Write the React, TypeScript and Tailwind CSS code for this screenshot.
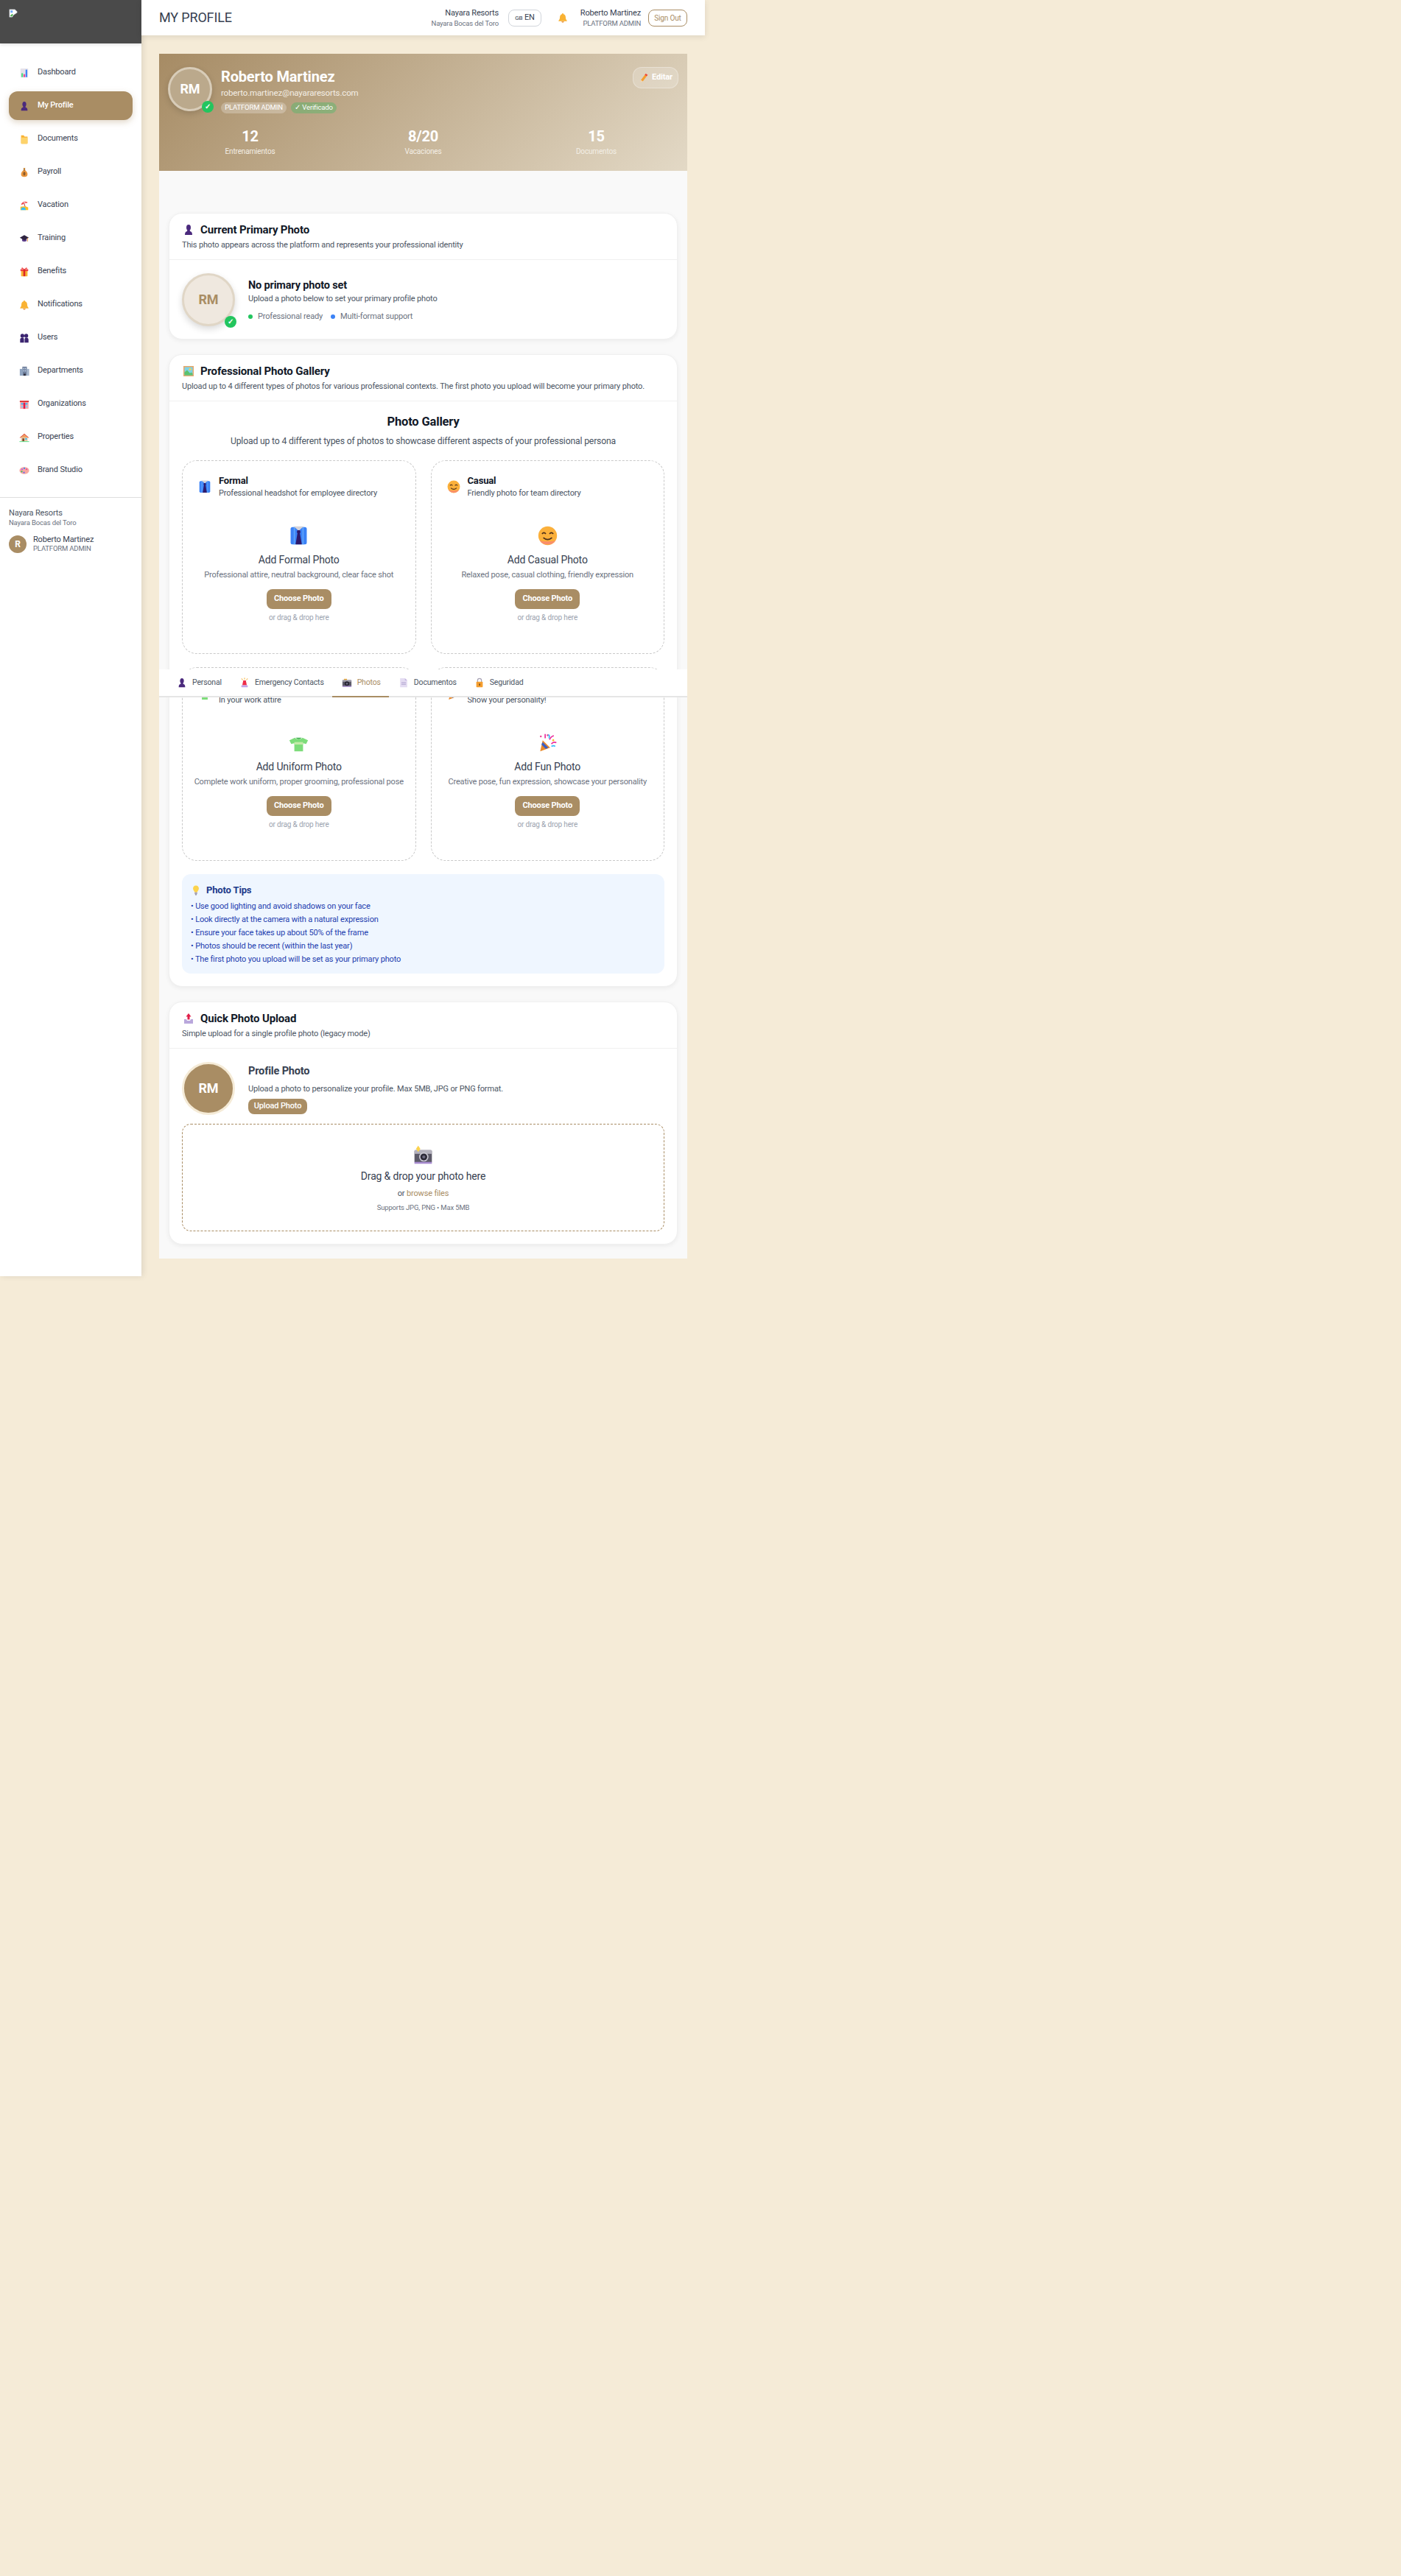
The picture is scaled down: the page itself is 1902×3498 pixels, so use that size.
import type { ReactNode } from "react";

type IconName =
  | "chart" | "person" | "folder" | "money" | "beach" | "cap" | "gift" | "bell" | "people"
  | "office" | "dept" | "house" | "palette" | "siren" | "camera" | "doc" | "lock" | "shirt"
  | "smile" | "tshirt" | "popper" | "bulb" | "frame" | "inbox" | "flash" | "pencil";

const GLYPHS: Record<IconName, ReactNode> = {
  chart: (
    <>
      <rect x="4" y="2" width="24" height="28" rx="2" fill="#e5e2ea" />
      <rect x="7" y="17" width="5" height="12" fill="#4ade80" />
      <rect x="13.5" y="20" width="5" height="9" fill="#ec4899" />
      <rect x="20" y="6" width="5" height="23" fill="#3b82f6" />
    </>
  ),
  person: (
    <>
      <ellipse cx="16" cy="10" rx="6" ry="8" fill="#4b2a7d" />
      <path d="M13 16h6l1 4c4 1 6 3 6 10H6c0-7 2-9 6-10z" fill="#4b2a7d" />
    </>
  ),
  folder: (
    <>
      <path d="M6 4h8l3 4h9v20a2 2 0 0 1-2 2H8a2 2 0 0 1-2-2z" fill="#f9b233" />
      <path d="M6 11h20v17a2 2 0 0 1-2 2H8a2 2 0 0 1-2-2z" fill="#fdd36b" />
    </>
  ),
  money: (
    <>
      <path d="M13 2h6l-1.500 7h-3z" fill="#c98a3c" />
      <path d="M14 9h4c6 4 8 9 8 13 0 6-4 8-10 8S6 28 6 22c0-4 2-9 8-13z" fill="#e9963e" />
      <ellipse cx="16" cy="20" rx="3.500" ry="6" fill="#8a5a2b" />
      <rect x="13" y="8" width="6" height="2" fill="#7c4a1e" />
    </>
  ),
  beach: (
    <>
      <path d="M6 14C8 5 18 1 27 7z" fill="#ef4444" />
      <path d="M12 9l4-4 5 3-3 4z" fill="#fecdd3" />
      <path d="M15 9l5 15" stroke="#b91c1c" strokeWidth="2" />
      <path d="M4 20c6-2 18-2 24 2v8H4z" fill="#fbbf24" />
      <path d="M8 22h10l3 8H5z" fill="#38bdf8" />
    </>
  ),
  cap: (
    <>
      <path d="M9 15h14v8c-3 3-11 3-14 0z" fill="#5b3d8a" />
      <path d="M16 5l14 8-14 8-14-8z" fill="#2f2440" />
      <path d="M26 14v11" stroke="#e08a3c" strokeWidth="2" />
    </>
  ),
  gift: (
    <>
      <rect x="6" y="10" width="20" height="20" rx="1" fill="#f9b233" />
      <rect x="4" y="8" width="24" height="6" fill="#ef4444" />
      <rect x="13" y="8" width="6" height="22" fill="#dc2626" />
      <path d="M16 8L9 2 7 7zM16 8l7-6 2 5z" fill="#ef4444" />
    </>
  ),
  bell: (
    <>
      <path d="M16 2c2 0 2.500 2 2.500 3 4 1 6.500 5 6.500 10 0 5 2 8 4 10v2H3v-2c2-2 4-5 4-10 0-5 2.500-9 6.500-10 0-1 .5-3 2.500-3z" fill="#f9b233" />
      <path d="M12 28h8c0 2-2 3-4 3s-4-1-4-3z" fill="#e07b1a" />
    </>
  ),
  people: (
    <>
      <circle cx="10" cy="9" r="6" fill="#3b2470" />
      <circle cx="22" cy="9" r="6" fill="#3b2470" />
      <path d="M3 30V21c0-4 3-6 7-6s5 2 5 6v9zM17 30v-9c0-4 1-6 5-6s7 2 7 6v9z" fill="#3b2470" />
    </>
  ),
  office: (
    <>
      <rect x="10" y="2" width="14" height="28" fill="#6f7f9b" />
      <rect x="2" y="9" width="9" height="21" fill="#8ea3c0" />
      <rect x="23" y="9" width="8" height="21" fill="#a4b5cc" />
      <rect x="13" y="6" width="3" height="4" fill="#c7d7ee" />
      <rect x="18" y="6" width="3" height="4" fill="#c7d7ee" />
      <rect x="13" y="13" width="3" height="4" fill="#c7d7ee" />
      <rect x="18" y="13" width="3" height="4" fill="#c7d7ee" />
      <rect x="14" y="24" width="6" height="6" fill="#2b2b3a" />
    </>
  ),
  dept: (
    <>
      <rect x="3" y="8" width="26" height="22" fill="#fca5a5" />
      <rect x="2" y="5" width="28" height="4" fill="#dc2626" />
      <rect x="6" y="12" width="7" height="5" fill="#38bdf8" />
      <rect x="19" y="12" width="7" height="5" fill="#38bdf8" />
      <rect x="13" y="11" width="6" height="19" fill="#e11d48" />
      <rect x="6" y="21" width="6" height="5" fill="#7dd3fc" />
      <rect x="20" y="21" width="6" height="5" fill="#7dd3fc" />
    </>
  ),
  house: (
    <>
      <rect x="6" y="15" width="20" height="13" fill="#e8c9a6" />
      <path d="M16 4L1 17h4l11-9 11 9h4z" fill="#e2583e" />
      <path d="M16 8L6 16h20z" fill="#f0a35e" />
      <rect x="10" y="19" width="6" height="9" fill="#7a4a2b" />
      <rect x="19" y="18" width="5" height="5" fill="#38bdf8" />
      <rect x="1" y="28" width="30" height="2" fill="#4ade80" />
    </>
  ),
  palette: (
    <>
      <ellipse cx="16" cy="16" rx="15" ry="11" fill="#f8a8a0" />
      <circle cx="9" cy="12" r="2.500" fill="#a855f7" />
      <circle cx="16" cy="9" r="2.500" fill="#3b82f6" />
      <circle cx="23" cy="12" r="2.500" fill="#ec4899" />
      <circle cx="8" cy="19" r="2.500" fill="#22c55e" />
      <circle cx="15" cy="22" r="2.500" fill="#6366f1" />
    </>
  ),
  siren: (
    <>
      <path d="M16 1v5M7 3l3 5M25 3l-3 5" stroke="#f59e0b" strokeWidth="2" />
      <path d="M12 9h8l3 15H9z" fill="#ef2d4b" />
      <rect x="6" y="24" width="20" height="6" rx="1" fill="#c4a5e8" />
    </>
  ),
  camera: (
    <>
      <rect x="7" y="4" width="9" height="5" fill="#f0b040" />
      <rect x="2" y="8" width="28" height="20" rx="2" fill="#5c5a68" />
      <rect x="2" y="8" width="28" height="5" fill="#a5a3b0" />
      <circle cx="16" cy="19" r="7" fill="#1f1d2a" />
      <circle cx="16" cy="19" r="3.500" fill="#67657a" />
      <rect x="2" y="26" width="28" height="3" fill="#a78bd0" />
    </>
  ),
  doc: (
    <>
      <path d="M5 2h15l7 7v21H5z" fill="#e4dcf2" />
      <path d="M20 2l7 7h-7z" fill="#c4b5e0" />
      <rect x="9" y="15" width="14" height="2" fill="#a99cc9" />
      <rect x="9" y="20" width="14" height="2" fill="#a99cc9" />
    </>
  ),
  lock: (
    <>
      <path d="M10 14V9a6 6 0 0 1 12 0v5" fill="none" stroke="#a8a3b5" strokeWidth="3" />
      <rect x="6" y="13" width="20" height="17" rx="2" fill="#f59e2e" />
      <rect x="15" y="19" width="2.500" height="6" fill="#3b2a1a" />
    </>
  ),
  shirt: (
    <>
      <rect x="3" y="2" width="26" height="28" rx="3" fill="#3b82f6" />
      <rect x="8" y="2" width="2" height="28" fill="#60a5fa" />
      <rect x="22" y="2" width="2" height="28" fill="#60a5fa" />
      <path d="M8 1h16l-8 7z" fill="#d6d3d8" />
      <path d="M14 7h4l1 3-1 2 3 18H11l3-18-1-2z" fill="#2e1a6b" />
    </>
  ),
  smile: (
    <>
      <circle cx="16" cy="16" r="15" fill="#fbb03b" />
      <path d="M16 30c-6 0-10-2-13-7 4 3 22 3 26 0-3 5-7 7-13 7z" fill="#f98080" opacity="0.7" />
      <path d="M7 13q3-4 6 0M19 13q3-4 6 0" fill="none" stroke="#4b2e1a" strokeWidth="2" />
      <path d="M9 19q7 6 14 0" fill="none" stroke="#4b2e1a" strokeWidth="2" />
    </>
  ),
  tshirt: (
    <>
      <path d="M10 8l-9 4 3 6 5-1v13h14V17l5 1 3-6-9-4c-1 3-11 3-12 0z" fill="#7ddc7a" />
      <rect x="9" y="15" width="14" height="4" fill="#c4eaa8" />
      <path d="M11 8q5 5 10 0" fill="#3fae4e" />
    </>
  ),
  popper: (
    <>
      <path d="M8 12l12 12-16 6z" fill="#e98a2b" />
      <path d="M8 15l9 9-4 2-7-7z" fill="#3b5fc4" />
      <circle cx="16" cy="4" r="1.500" fill="#ec4899" />
      <circle cx="5" cy="6" r="1.500" fill="#ec4899" />
      <path d="M12 2v7M19 11q3-6 7-6M22 18q3-4 8-2" fill="none" stroke="#ec2b9b" strokeWidth="2" />
      <path d="M17 3q3 2 1 6M22 22q4-2 6 0" fill="none" stroke="#38bdf8" strokeWidth="2" />
      <circle cx="25" cy="12" r="1.500" fill="#fbbf24" />
    </>
  ),
  bulb: (
    <>
      <path d="M16 1c6 0 9 4 9 9 0 5-4 7-5 12h-8c-1-5-5-7-5-12 0-5 3-9 9-9z" fill="#fcd34d" />
      <rect x="12" y="22" width="8" height="6" fill="#a8a3b5" />
      <rect x="14" y="28" width="4" height="3" fill="#7c7789" />
    </>
  ),
  frame: (
    <>
      <rect x="2" y="2" width="28" height="28" fill="#e8a86a" />
      <rect x="5" y="5" width="22" height="22" fill="#7dd3e8" />
      <circle cx="20" cy="11" r="3" fill="#fcd34d" />
      <path d="M5 27v-8l7-6 8 9 3-3 4 4v4z" fill="#5cc26f" />
    </>
  ),
  inbox: (
    <>
      <path d="M16 2l7 9h-4v8h-6v-8H9z" fill="#e11d48" />
      <path d="M4 18h6l2 4h8l2-4h6v12H4z" fill="#b9a7dc" />
    </>
  ),
  flash: (
    <>
      <rect x="2" y="8" width="28" height="21" rx="2" fill="#5c5a68" />
      <rect x="2" y="8" width="28" height="6" fill="#b3b1bd" />
      <circle cx="17" cy="19" r="7.500" fill="#c9c7d2" />
      <circle cx="17" cy="19" r="5.500" fill="#2a2836" />
      <circle cx="17" cy="19" r="2.500" fill="#6d6a80" />
      <rect x="2" y="27" width="28" height="3" fill="#a78bd0" />
      <path d="M8 1l3.500 5L8 11 4.500 6z" fill="#fcd34d" />
    </>
  ),
  pencil: (
    <>
      <path d="M22 2l6 4-15 20-6-4z" fill="#f59e2e" />
      <path d="M22 2l6 4-3 4-6-4z" fill="#ef4444" />
      <path d="M7 22l6 4-8 4z" fill="#f2d5b0" />
    </>
  ),
};

function Emoji({ name, className }: { name: IconName; className: string }) {
  return (
    <svg viewBox="0 0 32 32" className={className} aria-hidden="true">
      {GLYPHS[name]}
    </svg>
  );
}

const NAV: { icon: IconName; label: string; active?: boolean }[] = [
  { icon: "chart", label: "Dashboard" },
  { icon: "person", label: "My Profile", active: true },
  { icon: "folder", label: "Documents" },
  { icon: "money", label: "Payroll" },
  { icon: "beach", label: "Vacation" },
  { icon: "cap", label: "Training" },
  { icon: "gift", label: "Benefits" },
  { icon: "bell", label: "Notifications" },
  { icon: "people", label: "Users" },
  { icon: "office", label: "Departments" },
  { icon: "dept", label: "Organizations" },
  { icon: "house", label: "Properties" },
  { icon: "palette", label: "Brand Studio" },
];

const TABS: { icon: IconName; label: string; active?: boolean }[] = [
  { icon: "person", label: "Personal" },
  { icon: "siren", label: "Emergency Contacts" },
  { icon: "camera", label: "Photos", active: true },
  { icon: "doc", label: "Documentos" },
  { icon: "lock", label: "Seguridad" },
];

const STATS = [
  { value: "12", label: "Entrenamientos" },
  { value: "8/20", label: "Vacaciones" },
  { value: "15", label: "Documentos" },
];

const SLOTS: { icon: IconName; title: string; sub: string; add: string; desc: string }[] = [
  { icon: "shirt", title: "Formal", sub: "Professional headshot for employee directory", add: "Add Formal Photo", desc: "Professional attire, neutral background, clear face shot" },
  { icon: "smile", title: "Casual", sub: "Friendly photo for team directory", add: "Add Casual Photo", desc: "Relaxed pose, casual clothing, friendly expression" },
  { icon: "tshirt", title: "Uniform", sub: "In your work attire", add: "Add Uniform Photo", desc: "Complete work uniform, proper grooming, professional pose" },
  { icon: "popper", title: "Fun", sub: "Show your personality!", add: "Add Fun Photo", desc: "Creative pose, fun expression, showcase your personality" },
];

const TIPS = [
  "Use good lighting and avoid shadows on your face",
  "Look directly at the camera with a natural expression",
  "Ensure your face takes up about 50% of the frame",
  "Photos should be recent (within the last year)",
  "The first photo you upload will be set as your primary photo",
];

function CheckBadge() {
  return (
    <span className="absolute right-[-5px] bottom-[-5px] flex size-4 items-center justify-center rounded-full bg-[#22c55e] text-[10px] leading-none font-bold text-white">
      ✓
    </span>
  );
}

function Card({ icon, title, sub, children }: { icon: IconName; title: string; sub: string; children: ReactNode }) {
  return (
    <section className="rounded-[18px] border border-[#f0f0f0] bg-white shadow-[0_2px_6px_rgba(0,0,0,0.06)]">
      <div className="h-[63px] border-b border-[#f0f0f0] px-[17px] pt-3">
        <div className="flex h-5 items-center gap-[7px]">
          <Emoji name={icon} className="size-[18px] p-px" />
          <h2 className="text-[15px] leading-5 font-bold text-[#111827]">{title}</h2>
        </div>
        <p className="mt-[3px] text-[11px] leading-4 text-[#4b5563]">{sub}</p>
      </div>
      {children}
    </section>
  );
}

function PhotoSlot({ slot }: { slot: (typeof SLOTS)[number] }) {
  return (
    <div className="h-[263px] rounded-[20px] border border-dashed border-[#c9c9c9] bg-white">
      <div className="flex items-center gap-2.5 pt-[18px] pl-[21px]">
        <Emoji name={slot.icon} className="size-[18px]" />
        <div>
          <h4 className="text-[13px] leading-[18px] font-bold text-[#111827]">{slot.title}</h4>
          <p className="text-[11px] leading-4 text-[#4b5563]">{slot.sub}</p>
        </div>
      </div>
      <div className="mt-9 flex flex-col items-center">
        <Emoji name={slot.icon} className="size-[27px]" />
        <p className="mt-2 text-sm leading-[22px] text-[#374151]">{slot.add}</p>
        <p className="mt-0.5 text-[11px] leading-4 text-[#6b7280]">{slot.desc}</p>
        <button className="mt-[11px] h-[27px] w-[88px] rounded-lg bg-[#a98d64] text-[11px] font-bold text-white">Choose Photo</button>
        <p className="mt-[5px] text-[10px] leading-[14px] text-[#9ca3af]">or drag &amp; drop here</p>
      </div>
    </div>
  );
}

export default function App() {
  return (
    <div className="relative flex h-[3498px] w-[1902px] items-start bg-[#f5ebd7] font-['Roboto',sans-serif] tracking-[-0.01em]">
      <aside className="h-[1733px] w-[192px] shrink-0 bg-white shadow-[2px_0_8px_rgba(0,0,0,0.1)]">
        <div className="h-[59px] bg-[#4a4a4a] pt-3 pl-3 shadow-[0_2px_4px_rgba(0,0,0,0.1)]">
          <svg viewBox="0 0 16 16" className="size-3">
            <path d="M1 1h10l4 4v2L9 11l-3 4H1z" fill="#fff" stroke="#9ca3af" strokeWidth="0.6" />
            <path d="M3 3h4v4H3z" fill="#6ea8fe" />
            <path d="M2 13l4-4 2 2-3 3z" fill="#4caf50" />
          </svg>
        </div>
        <nav className="flex flex-col gap-1.5 px-3 pt-5">
          {NAV.map((item) => (
            <a
              key={item.label}
              className={`flex h-[39px] items-center gap-[11px] rounded-xl pl-3.5 text-[11px] ${
                item.active ? "bg-[#a98d64] font-medium text-white shadow-[0_3px_8px_rgba(169,141,100,0.35)]" : "text-[#374151]"
              }`}
            >
              <Emoji name={item.icon} className="size-[14px]" />
              {item.label}
            </a>
          ))}
        </nav>
        <div className="mt-[17px] border-t border-[#dedede] pt-[13px] pl-3">
          <p className="text-[11px] leading-[15px] text-[#4b5563]">Nayara Resorts</p>
          <p className="text-[9.5px] leading-[12px] text-[#6b7280]">Nayara Bocas del Toro</p>
          <div className="mt-2.5 flex items-center gap-[9px]">
            <div className="flex size-6 items-center justify-center rounded-full bg-[#a98d64] text-xs font-bold text-white">R</div>
            <div>
              <p className="text-[11px] leading-[13px] text-[#374151]">Roberto Martinez</p>
              <p className="text-[9.5px] leading-[12px] text-[#6b7280]">PLATFORM ADMIN</p>
            </div>
          </div>
        </div>
      </aside>

      <main className="w-[765px] shrink-0">
        <header className="flex h-12 items-center bg-white px-6 shadow-[0_2px_8px_rgba(0,0,0,0.1)]">
          <h1 className="text-lg text-[#374151]">MY PROFILE</h1>
          <div className="ml-auto text-right">
            <p className="text-[11px] leading-[14px] text-[#374151]">Nayara Resorts</p>
            <p className="text-[9.5px] leading-[13px] text-[#6b7280]">Nayara Bocas del Toro</p>
          </div>
          <button className="ml-[13px] h-[23px] w-[45px] rounded-lg border border-[#d1d5db] text-[11px] text-[#374151]">
            <span className="text-[8px]">GB</span> EN
          </button>
          <Emoji name="bell" className="ml-5 size-[18px] p-0.5" />
          <div className="w-[97px] text-right">
            <p className="text-[11px] leading-[14px] text-[#374151]">Roberto Martinez</p>
            <p className="text-[9.5px] leading-[13px] text-[#6b7280]">PLATFORM ADMIN</p>
          </div>
          <button className="ml-2.5 h-[23px] w-[53px] rounded-lg border border-[#a98d64] text-[10px] text-[#a98d64]">Sign Out</button>
        </header>

        <div className="mx-6 mt-[25px] bg-[#f9f9f9] pb-[19px]">
          <div className="h-[159px] bg-[linear-gradient(135deg,#a68b64,#e3d9c6)] px-3 pt-[18px] text-white">
            <div className="flex items-start">
              <div className="relative flex size-[60px] items-center justify-center rounded-full border-[3px] border-[#d8ccb8] bg-[#bba98c] text-lg font-bold shadow-[0_3px_8px_rgba(0,0,0,0.15)]">
                RM
                <CheckBadge />
              </div>
              <div className="ml-3">
                <h2 className="text-xl leading-[26px] font-bold">Roberto Martinez</h2>
                <p className="mt-px text-[11.5px] leading-4 text-[#f3eee5]">roberto.martinez@nayararesorts.com</p>
                <div className="mt-[5px] flex gap-1.5">
                  <span className="flex h-[15px] w-[89px] items-center justify-center rounded-full bg-white/25 text-[9.5px]">PLATFORM ADMIN</span>
                  <span className="flex h-[15px] w-[62px] items-center justify-center rounded-full bg-[#22c55e]/30 text-[9.5px]">✓ Verificado</span>
                </div>
              </div>
              <button className="ml-auto flex h-[29px] w-[62px] items-center justify-center gap-1 rounded-xl border border-white/30 bg-white/20 text-[11px] font-bold">
                <Emoji name="pencil" className="size-3.5" />
                Editar
              </button>
            </div>
            <div className="mt-[17px] -ml-1.5 grid w-[705px] grid-cols-3 text-center">
              {STATS.map((stat) => (
                <div key={stat.label}>
                  <p className="text-xl leading-7 font-bold">{stat.value}</p>
                  <p className="text-[10px] leading-[14px] text-[#f3eee5]">{stat.label}</p>
                </div>
              ))}
            </div>
          </div>

          <div className="flex flex-col gap-5 px-[13px] pt-[57px]">
            <Card icon="person" title="Current Primary Photo" sub="This photo appears across the platform and represents your professional identity">
              <div className="flex gap-[18px] px-[17px] pt-[18px] pb-[17px]">
                <div className="relative flex size-[72px] shrink-0 items-center justify-center rounded-full border-[3px] border-[#e0d6c6] bg-[#efe8df] text-lg font-bold text-[#a98d64] shadow-[0_4px_10px_rgba(0,0,0,0.15)]">
                  RM
                  <CheckBadge />
                </div>
                <div className="pt-2">
                  <h3 className="text-[14.5px] leading-[18px] font-bold text-[#111827]">No primary photo set</h3>
                  <p className="mt-px text-[11px] leading-4 text-[#4b5563]">Upload a photo below to set your primary profile photo</p>
                  <div className="mt-2 flex items-center gap-[11px] text-[11px] leading-4 text-[#6b7280]">
                    <span className="flex items-center gap-[7px]"><i className="size-[6px] rounded-full bg-[#22c55e]" />Professional ready</span>
                    <span className="flex items-center gap-[7px]"><i className="size-[6px] rounded-full bg-[#3b82f6]" />Multi-format support</span>
                  </div>
                </div>
              </div>
            </Card>

            <Card icon="frame" title="Professional Photo Gallery" sub="Upload up to 4 different types of photos for various professional contexts. The first photo you upload will become your primary photo.">
              <div className="px-[17px] pt-4 pb-[17px]">
                <h3 className="text-center text-[16.5px] leading-6 font-bold text-[#111827]">Photo Gallery</h3>
                <p className="mt-1 text-center text-[12.2px] leading-5 text-[#4b5563]">Upload up to 4 different types of photos to showcase different aspects of your professional persona</p>
                <div className="mt-4 grid grid-cols-2 gap-x-5 gap-y-[18px]">
                  {SLOTS.map((slot) => (
                    <PhotoSlot key={slot.title} slot={slot} />
                  ))}
                </div>
                <div className="mt-[18px] h-[135px] rounded-xl bg-[#eff6ff] px-3 pt-3">
                  <div className="flex h-5 items-center gap-[7px]">
                    <Emoji name="bulb" className="size-3.5" />
                    <h4 className="text-[13px] font-bold text-[#1e3a8a]">Photo Tips</h4>
                  </div>
                  <ul className="mt-[3px] text-[11px] leading-[18px] text-[#1e40af]">
                    {TIPS.map((tip) => (
                      <li key={tip}>• {tip}</li>
                    ))}
                  </ul>
                </div>
              </div>
            </Card>

            <Card icon="inbox" title="Quick Photo Upload" sub="Simple upload for a single profile photo (legacy mode)">
              <div className="px-[17px] pt-[18px] pb-[17px]">
                <div className="flex gap-[18px]">
                  <div className="flex size-[72px] shrink-0 items-center justify-center rounded-full border-[3px] border-[#f5ebd7] bg-[#a98d64] text-lg font-bold text-white">RM</div>
                  <div className="pt-[3px]">
                    <h3 className="text-[14.5px] leading-5 font-bold text-[#374151]">Profile Photo</h3>
                    <p className="mt-1.5 text-[11px] leading-4 text-[#4b5563]">Upload a photo to personalize your profile. Max 5MB, JPG or PNG format.</p>
                    <button className="mt-[5px] h-[21px] w-20 rounded-lg bg-[#a98d64] text-[11px] font-medium whitespace-nowrap text-white">Upload Photo</button>
                  </div>
                </div>
                <div className="mt-3 flex h-[146px] flex-col items-center rounded-xl border border-dashed border-[#a98d64] pt-[28px]">
                  <Emoji name="flash" className="size-[27px]" />
                  <p className="mt-1 text-sm leading-[22px] text-[#374151]">Drag &amp; drop your photo here</p>
                  <p className="mt-[5px] text-[11px] leading-4 text-[#4b5563]">or <span className="text-[#a98d64]">browse files</span></p>
                  <p className="mt-1 text-[9.5px] leading-[14px] text-[#6b7280]">Supports JPG, PNG • Max 5MB</p>
                </div>
              </div>
            </Card>
          </div>
        </div>
      </main>

      <div className="absolute top-[909px] left-[216px] flex h-[38px] w-[717px] border-b-2 border-[#e5e5e5] bg-white pl-[11px]">
        {TABS.map((tab) => (
          <div
            key={tab.label}
            className={`flex h-[38px] items-center gap-[5px] border-b-2 px-[11px] text-[10.5px] ${
              tab.active ? "border-[#a98d64] text-[#a98d64]" : "border-transparent text-[#4b5563]"
            }`}
          >
            <Emoji name={tab.icon} className="size-[18px] p-0.5" />
            {tab.label}
          </div>
        ))}
      </div>
    </div>
  );
}
